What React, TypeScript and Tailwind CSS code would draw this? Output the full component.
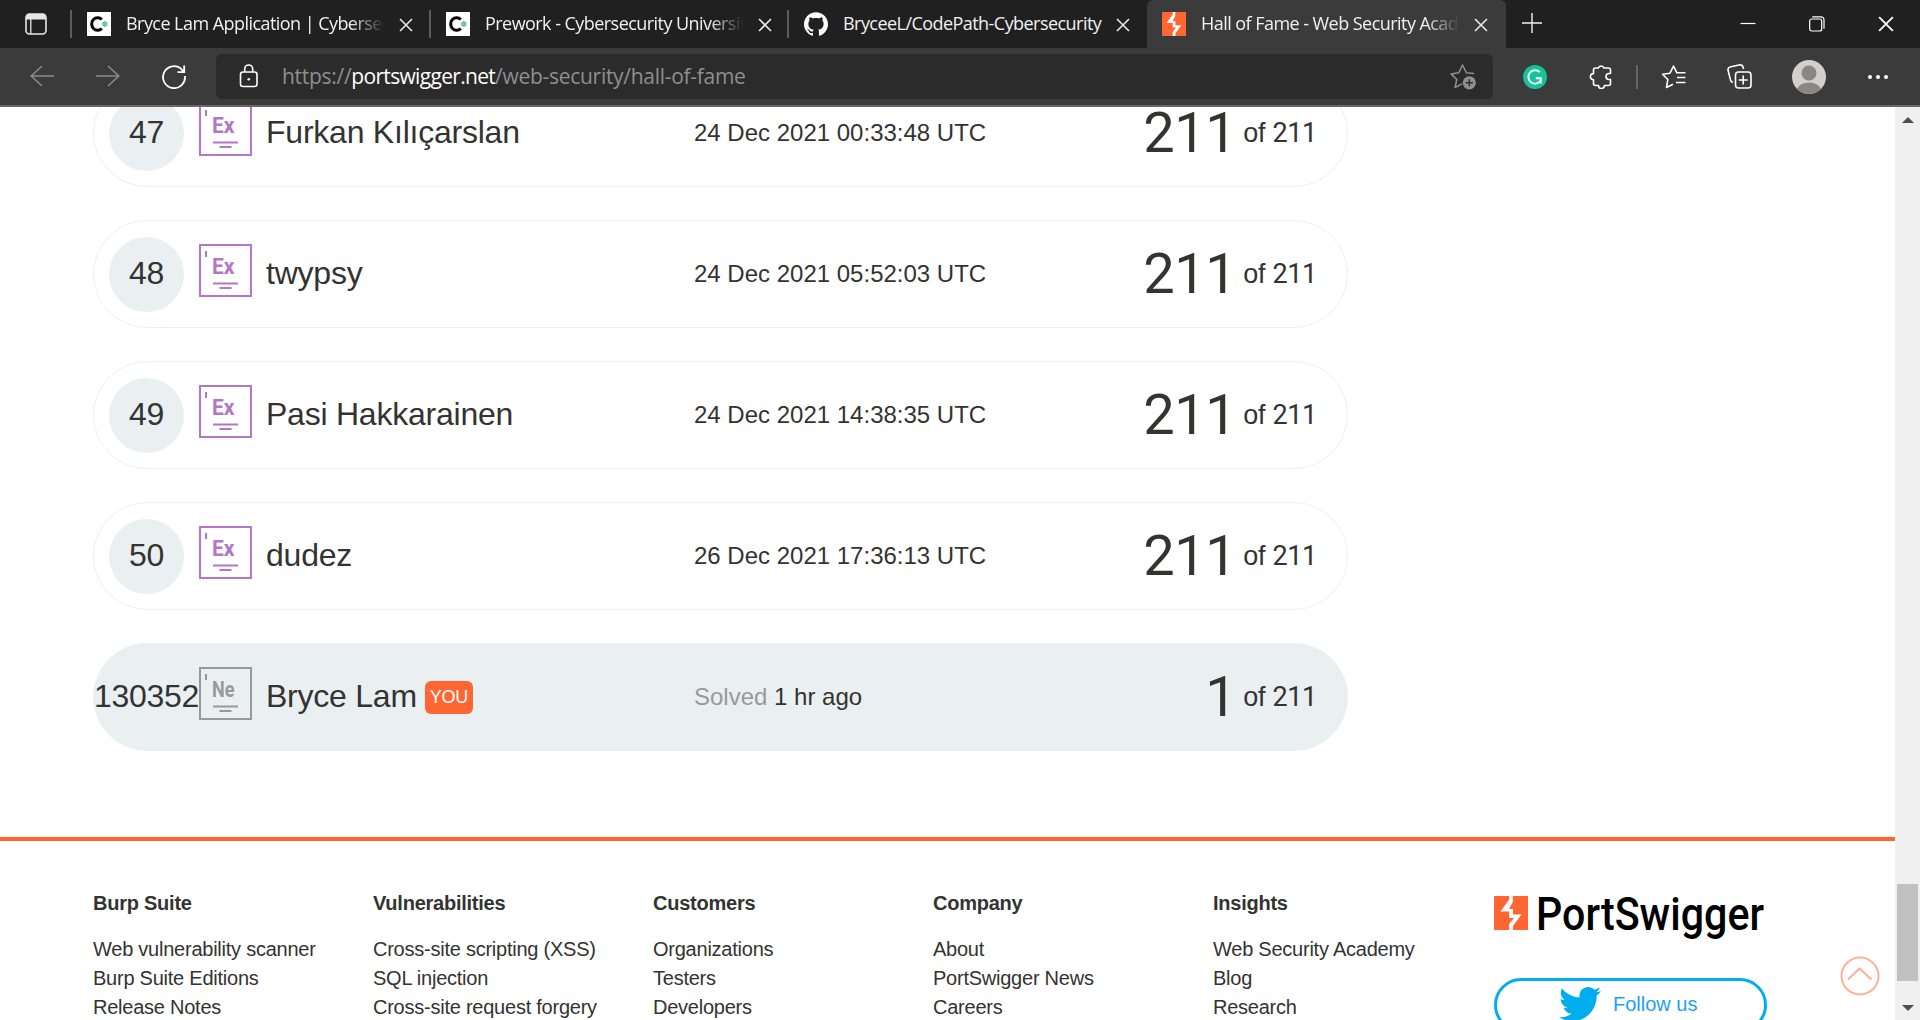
import React from "react";
import { FaTwitter } from "react-icons/fa";
import { SiGithub } from "react-icons/si";

const UI = "font-['Open_Sans',sans-serif]";

function Bolt({ className }: { className: string }) {
  return (
    <svg viewBox="0 0 34 34" className={className} preserveAspectRatio="none">
      <rect width="34" height="34" fill="#ff6633" />
      <path
        fill="#fff"
        d="M15.200 0H18.800V6L15 13H19V18.600H27.500L19 30V34H15.200V28L20 22H15.200V15.500H6.500L15.200 3.500Z"
      />
    </svg>
  );
}

function CodePathIcon() {
  return (
    <svg viewBox="0 0 24 24" className="h-6 w-6 shrink-0">
      <rect width="24" height="24" fill="#fff" />
      <path d="M14.800 7.600A5.900 6.300 0 1 0 14.800 16.400" fill="none" stroke="#000" strokeWidth="3" />
      <g stroke="#6cc79b" strokeWidth="2">
        <path d="M17.800 9v6M15.200 10.500l5.200 3M20.400 10.500l-5.200 3" />
      </g>
    </svg>
  );
}

function CloseIcon({ className }: { className: string }) {
  return (
    <svg viewBox="0 0 14 14" className={className}>
      <path d="M1 1L13 13M13 1L1 13" stroke="currentColor" strokeWidth="1.600" fill="none" />
    </svg>
  );
}

function Tab({ icon, title, width, fade }: { icon: React.ReactNode; title: string; width: string; fade: boolean }) {
  return (
    <div className={`flex h-full items-center pl-[15px] ${width}`}>
      {icon}
      <span
        className={`mb-[2px] ml-[15px] w-[261px] shrink-0 overflow-hidden whitespace-nowrap text-[18px] leading-[28px] tracking-[-0.55px] text-[#f0f0f0] ${
          fade ? "[mask-image:linear-gradient(to_right,black_86%,transparent_99%)]" : ""
        }`}
      >
        {title}
      </span>
      <CloseIcon className="ml-[12px] mt-[2px] h-[14px] w-[14px] shrink-0 text-[#e8e8e8]" />
    </div>
  );
}

function TabStrip() {
  return (
    <div className="flex h-12 shrink-0 bg-[#202020]">
      <div className="flex w-[70px] items-center pl-[25px]">
        <svg viewBox="0 0 22 22" className="h-[22px] w-[22px]" fill="none">
          <rect x="1" y="1" width="20" height="20" rx="3.500" stroke="#e6e6e6" strokeWidth="1.600" />
          <path d="M1 6.500V4a3 3 0 0 1 3-3h14a3 3 0 0 1 3 3v2.500z" fill="#e6e6e6" />
          <path d="M5.800 6v15" stroke="#e6e6e6" strokeWidth="1.300" />
        </svg>
      </div>
      <div className="my-[10px] w-[2px] bg-[#5c5c5c]" />
      <Tab icon={<CodePathIcon />} title="Bryce Lam Application | Cybersecurity" width="w-[357px]" fade />
      <div className="my-[10px] w-[2px] bg-[#5c5c5c]" />
      <Tab icon={<CodePathIcon />} title="Prework - Cybersecurity University" width="w-[356px]" fade />
      <div className="my-[10px] w-[2px] bg-[#5c5c5c]" />
      <Tab
        icon={<SiGithub className="h-6 w-6 shrink-0 text-white" />}
        title="BryceeL/CodePath-Cybersecurity"
        width="w-[358px]"
        fade={false}
      />
      <div className="flex w-[359px] rounded-t-[6px] bg-[#3b3b3b]">
        <Tab icon={<Bolt className="h-6 w-6 shrink-0" />} title="Hall of Fame - Web Security Academy" width="w-[359px]" fade />
      </div>
      <svg viewBox="0 0 22 22" className="ml-[15px] mt-[12px] h-[22px] w-[22px]">
        <path d="M11 1v20M1 11h20" stroke="#f2f2f2" strokeWidth="1.400" />
      </svg>
      <div className="ml-auto flex items-center pr-[26px] text-white">
        <svg viewBox="0 0 16 16" className="h-4 w-4">
          <path d="M0.500 7.500h15" stroke="currentColor" strokeWidth="1.200" />
        </svg>
        <svg viewBox="0 0 16 16" className="ml-[53px] h-4 w-4" fill="none" stroke="currentColor" strokeWidth="1.200">
          <rect x="0.700" y="3" width="12" height="12" rx="2" />
          <path d="M3.200 0.800H12a3 3 0 0 1 3 3v9" />
        </svg>
        <CloseIcon className="ml-[53px] h-4 w-4" />
      </div>
    </div>
  );
}

function Toolbar() {
  return (
    <div className="flex h-[59px] shrink-0 items-center border-b-2 border-[#6a6666] bg-[#3b3b3b]">
      <svg viewBox="0 0 24 22" className="mb-[2px] ml-[30px] h-[22px] w-6" fill="none" stroke="#8c8c8c" strokeWidth="1.500">
        <path d="M24 11H1.200M12 1L1.200 11L12 21" />
      </svg>
      <svg viewBox="0 0 24 22" className="mb-[2px] ml-[42px] h-[22px] w-6" fill="none" stroke="#8c8c8c" strokeWidth="1.500">
        <path d="M0 11H22.800M12 1L22.800 11L12 21" />
      </svg>
      <svg viewBox="0 0 24 24" className="ml-[42px] h-6 w-6" fill="none" stroke="#fff" strokeWidth="1.800">
        <path d="M23 11A11 11 0 1 1 18.500 3.200L22 7M22.200 0.500V7.200H15.500" />
      </svg>
      <div className="ml-[30px] flex h-[45px] w-[1277px] items-center rounded-[6px] bg-[#2b2b2b]">
        <svg viewBox="0 0 20 24" className="mb-[2px] ml-[23px] h-6 w-5" fill="none" stroke="#fff" strokeWidth="1.600">
          <rect x="1.500" y="8" width="16.500" height="14.500" rx="2.500" />
          <path d="M5.700 8V5a4 4 0 0 1 8 0v3" />
          <circle cx="9.800" cy="15.200" r="1.300" fill="#fff" stroke="none" />
        </svg>
        <span className="mb-[2px] ml-[23px] whitespace-nowrap text-[21px] leading-[30px] tracking-[-0.29px] text-[#8f8f8f]">
          https://<span className="tracking-[-0.68px] text-white">portswigger.net</span>
          /web-security/hall-of-fame
        </span>
        <svg viewBox="0 0 26 26" className="ml-auto mr-[17px] h-[26px] w-[26px]" fill="none" stroke="#8f8f8f" strokeWidth="1.500">
          <path d="M24 9.600L16.500 8.800L12.500 1L8.700 8.800L1 9.900L6.800 15.500L5 23.500L12 19.800" strokeLinejoin="round" />
          <circle cx="19.300" cy="18.800" r="6.600" fill="#8f8f8f" stroke="none" />
          <path d="M19.300 15.300v7M15.800 18.800h7" stroke="#2b2b2b" strokeWidth="1.400" />
        </svg>
      </div>
      <svg viewBox="0 0 24 24" className="ml-[30px] h-6 w-6" fill="none">
        <circle cx="12" cy="12" r="12" fill="#15c39a" />
        <path d="M16.800 7.200A6.700 6.700 0 1 0 18 15M12.800 13.300H17.800V18.500" stroke="#fff" strokeWidth="1.900" />
      </svg>
      <svg viewBox="0 0 24 25" className="ml-[42px] h-[25px] w-6" fill="none" stroke="#fff" strokeWidth="1.600" strokeLinejoin="round">
        <path d="M6.500 4H9.300A3 3 0 0 1 15 4H19.500Q21.500 4 21.500 6V9.500H20A3 3 0 0 0 20 15.500H21.500V19.500Q21.500 21.500 19.500 21.500H15.500A3 3 0 0 1 9.500 21.500H6.500Q4.500 21.500 4.500 19.500V15.800A3 3 0 0 1 4.500 9.600V6Q4.500 4 6.500 4" />
      </svg>
      <div className="ml-[23px] h-6 w-[2px] bg-[#666]" />
      <svg viewBox="0 0 26 24" className="ml-[23px] h-6 w-[26px]" fill="none" stroke="#fff" strokeWidth="1.600" strokeLinejoin="round">
        <path d="M16 8.200L12.500 1L9 8.200L1.500 9.300L6.800 14.500L5.500 22.500L12 19.200M16 12.500H24.500M15.500 7.800H24.500M15 17.500H24.500" />
      </svg>
      <svg viewBox="0 0 25 25" className="ml-[40px] h-[25px] w-[25px]" fill="none" stroke="#fff" strokeWidth="1.600">
        <rect x="8.500" y="8" width="15.500" height="16" rx="3" />
        <path d="M16.200 11.500v9M11.700 16h9M5.800 18.500Q4 18 3.500 16L1 6Q0.800 3.500 3 3L13 0.800Q15.500 0.800 16 3L16.500 5" />
      </svg>
      <svg viewBox="0 0 34 34" className="ml-[40px] h-[34px] w-[34px]">
        <circle cx="17" cy="17" r="17" fill="#d2d0ce" />
        <circle cx="17" cy="13" r="7.500" fill="#8a8682" />
        <path d="M5 29a12.500 9 0 0 1 24 0a17 17 0 0 1-24 0" fill="#8a8682" />
      </svg>
      <svg viewBox="0 0 22 6" className="ml-[41px] h-[6px] w-[22px]" fill="#fff">
        <circle cx="3" cy="3" r="2" />
        <circle cx="11" cy="3" r="2" />
        <circle cx="19" cy="3" r="2" />
      </svg>
    </div>
  );
}

function LevelBadge({ label, color }: { label: string; color: string }) {
  return (
    <svg viewBox="0 0 53 53" className={`mb-[7px] h-[53px] w-[53px] shrink-0 ${color}`} fill="none" stroke="currentColor">
      <rect x="1" y="1" width="51" height="51" strokeWidth="2" />
      <path d="M7 7v6" strokeWidth="2" />
      <path d="M14 39.500h25M20.500 44h12" strokeWidth="2" />
      <text
        x="13"
        y="30"
        fill="currentColor"
        stroke="none"
        fontFamily="Roboto"
        fontWeight="700"
        fontSize="22"
        textLength="22.5"
        lengthAdjust="spacingAndGlyphs"
      >
        {label}
      </text>
    </svg>
  );
}

function Row({ rank, name, date, you }: { rank: string; name: string; date: string; you?: boolean }) {
  return (
    <div
      className={`flex h-[108px] w-[1255px] shrink-0 items-center rounded-full border border-[#eaf0f2] ${
        you ? "bg-[#eaf0f2]" : "bg-white"
      }`}
    >
      <div className="ml-[15px] flex h-[75px] w-[75px] shrink-0 items-center justify-center rounded-full bg-[#eaf0f2] pb-[2px] text-[32px] tracking-[-0.3px]">
        {rank}
      </div>
      <div className="ml-[15px]">
        <LevelBadge label={you ? "Ne" : "Ex"} color={you ? "text-[#999999]" : "text-[#b377c6]"} />
      </div>
      <div className="ml-[14px] flex w-[428px] items-center pb-[2px] text-[32px] whitespace-nowrap tracking-[-0.23px]">
        {name}
        {you && (
          <span className="ml-[8px] mt-[3px] flex h-[33px] w-[48px] items-center justify-center rounded-[6px] bg-[#ff6633] text-[18px] text-white">
            YOU
          </span>
        )}
      </div>
      <div className="text-[24px] whitespace-nowrap">
        {you && <span className="text-[#999999]">Solved </span>}
        {date}
      </div>
      <div className="ml-auto mr-[30px] flex items-center whitespace-nowrap">
        <span className="font-[Roboto,sans-serif] text-[56px] leading-[64px] tracking-[-0.5px]">{you ? "1" : "211"}</span>
        <span className="ml-[7px] text-[27px] leading-[32px] tracking-[-0.3px]">
          of <span className="font-[Roboto,sans-serif]">211</span>
        </span>
      </div>
    </div>
  );
}

const columns = [
  { title: "Burp Suite", links: ["Web vulnerability scanner", "Burp Suite Editions", "Release Notes"] },
  { title: "Vulnerabilities", links: ["Cross-site scripting (XSS)", "SQL injection", "Cross-site request forgery"] },
  { title: "Customers", links: ["Organizations", "Testers", "Developers"] },
  { title: "Company", links: ["About", "PortSwigger News", "Careers"] },
  { title: "Insights", links: ["Web Security Academy", "Blog", "Research"] },
];

function Footer() {
  return (
    <div className="mt-[86px] flex h-[400px] w-full shrink-0 border-t-4 border-[#ff6633] pl-[93px] pt-[47px]">
      {columns.map((c) => (
        <div key={c.title} className="w-[280px] shrink-0 whitespace-nowrap text-[20px] tracking-[-0.24px]">
          <div className="font-bold leading-[30px]">{c.title}</div>
          <div className="mt-[17px]">
            {c.links.map((l) => (
              <div key={l} className="leading-[29px]">
                {l}
              </div>
            ))}
          </div>
        </div>
      ))}
      <div className="ml-[1px] pt-[8px]">
        <div className="flex h-[46px]">
          <Bolt className="h-[34px] w-[34px]" />
          <svg className="ml-[8px] h-[46px] w-[230px] overflow-visible">
            <text x="0" y="34" fontFamily="Roboto" fontWeight="500" fontSize="46" fill="#000" textLength="228" lengthAdjust="spacingAndGlyphs">
              PortSwigger
            </text>
          </svg>
        </div>
        <div className="mt-[36px] flex h-[54px] w-[273px] items-center rounded-full border-[3px] border-[#00aeef] pb-[2px] pl-[62px] text-[20px] text-[#1da1f2]">
          <FaTwitter className="h-[42px] w-[42px] text-[#00aeef]" />
          <span className="ml-[12px]">Follow us</span>
        </div>
      </div>
    </div>
  );
}

export default function App() {
  return (
    <div className={`flex h-[1020px] w-[1920px] flex-col overflow-hidden bg-white ${UI}`}>
      <TabStrip />
      <Toolbar />
      <div className="flex min-h-0 flex-1">
        <div className="relative flex w-[1895px] flex-col overflow-hidden font-['Liberation_Sans',Arial,sans-serif] text-[#333332]">
          <div className="-mt-[28px] ml-[93px] flex shrink-0 flex-col gap-[33px]">
            <Row rank="47" name="Furkan Kılıçarslan" date="24 Dec 2021 00:33:48 UTC" />
            <Row rank="48" name="twypsy" date="24 Dec 2021 05:52:03 UTC" />
            <Row rank="49" name="Pasi Hakkarainen" date="24 Dec 2021 14:38:35 UTC" />
            <Row rank="50" name="dudez" date="26 Dec 2021 17:36:13 UTC" />
            <Row rank="130352" name="Bryce Lam" date="1 hr ago" you />
          </div>
          <Footer />
          <svg viewBox="0 0 40 40" className="absolute bottom-[24px] right-[15px] h-10 w-10" fill="none" stroke="#ffb299">
            <circle cx="20" cy="20" r="18.500" strokeWidth="2" />
            <path d="M8 23.500L19.500 12.500L31.500 23.500" strokeWidth="2.300" />
          </svg>
        </div>
        <div className="flex w-[25px] flex-col items-center bg-[#f0f0f0]">
          <svg viewBox="0 0 12 6" className="mt-[10px] h-[6px] w-3">
            <path d="M0 6L6 0L12 6z" fill="#505050" />
          </svg>
          <div className="mt-auto h-[97px] w-[21px] bg-[#c1c1c1]" />
          <svg viewBox="0 0 12 6" className="mb-[9px] mt-[24px] h-[6px] w-3">
            <path d="M0 0L6 6L12 0z" fill="#505050" />
          </svg>
        </div>
      </div>
    </div>
  );
}
